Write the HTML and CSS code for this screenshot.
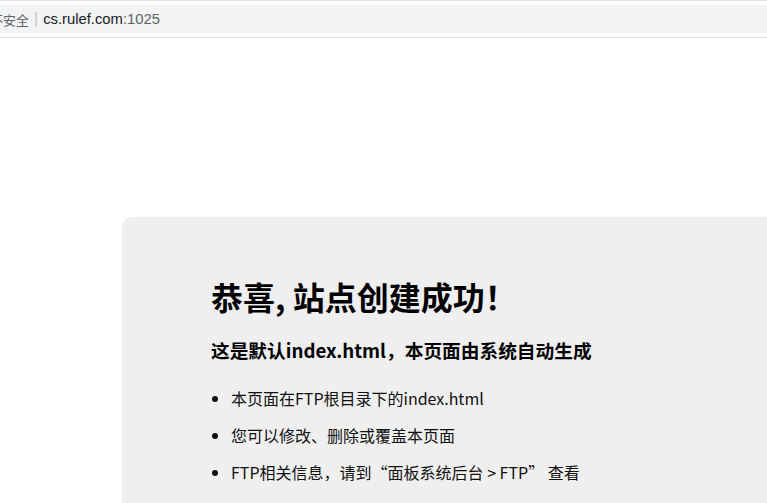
FILE: index.html
```html
<!DOCTYPE html>
<html lang="zh-CN">

<head>
  <meta charset="UTF-8" />
  <meta name="viewport" content="width=device-width, initial-scale=1.0" />
  <title>恭喜，站点创建成功！</title>
  <link rel="stylesheet" href="styles.css">
</head>

<body>

  <!-- browser address bar -->
  <div class="chrome-bar">
    <div class="omnibox">
      <span class="not-secure">不安全</span>
      <span class="divider">|</span>
      <span class="url">cs.rulef.com<span class="port">:1025</span></span>
    </div>
  </div>

  <div class="page">
    <div class="container">
      <h1>恭喜, 站点创建成功！</h1>
      <h3>这是默认index.html，本页面由系统自动生成</h3>
      <ul>
        <li>本页面在FTP根目录下的index.html</li>
        <li>您可以修改、删除或覆盖本页面</li>
        <li>FTP相关信息，请到“面板系统后台 &gt; FTP” 查看</li>
      </ul>
    </div>
  </div>

</body>
</html>
```

FILE: styles.css
```css
* {
  box-sizing: border-box;
}

html,
body {
  margin: 0;
  height: 100%;
  overflow: hidden;
  background: #fff;
}

body {
  font-family: "Noto Sans CJK SC", "Noto Sans", sans-serif;
  color: #000;
}

.chrome-bar {
  height: 38px;
  border-top: 1px solid #dfe1e5;
  border-bottom: 1px solid #dadce0;
  padding: 4px 0;
  background: #fff;
}

.omnibox {
  height: 28px;
  background: #f1f3f4;
  display: flex;
  align-items: center;
  font-family: "Liberation Sans", "Noto Sans CJK SC", sans-serif;
  font-size: 15px;
  white-space: nowrap;
  overflow: hidden;
}

.not-secure {
  margin-left: -10px;
  color: #5f6368;
  font-size: 13px;
  font-family: "Noto Sans CJK SC", sans-serif;
}

.divider {
  color: #c4c7c5;
  margin: 0 5px 0 5px;
  font-size: 16px;
}

.url {
  color: #202124;
  font-size: 14.8px;
}

.port {
  color: #5f6368;
}

.page {
  padding-top: 179px;
}

.container {
  margin-left: 122px;
  min-height: 320px;
  background: #efefef;
  border-radius: 10px 0 0 0;
  padding: 36px 89px;
}

h1 {
  margin: 21px 0 0;
  font-size: 32px;
  line-height: 44px;
  font-weight: bold;
}

h3 {
  margin: 19px 0 0;
  font-size: 18.7px;
  line-height: 26px;
  font-weight: bold;
}

ul {
  margin: 17px 0 0;
  padding-left: 20px;
}

ul li {
  font-size: 16px;
  line-height: 2.3;
  color: #111;
}
```
